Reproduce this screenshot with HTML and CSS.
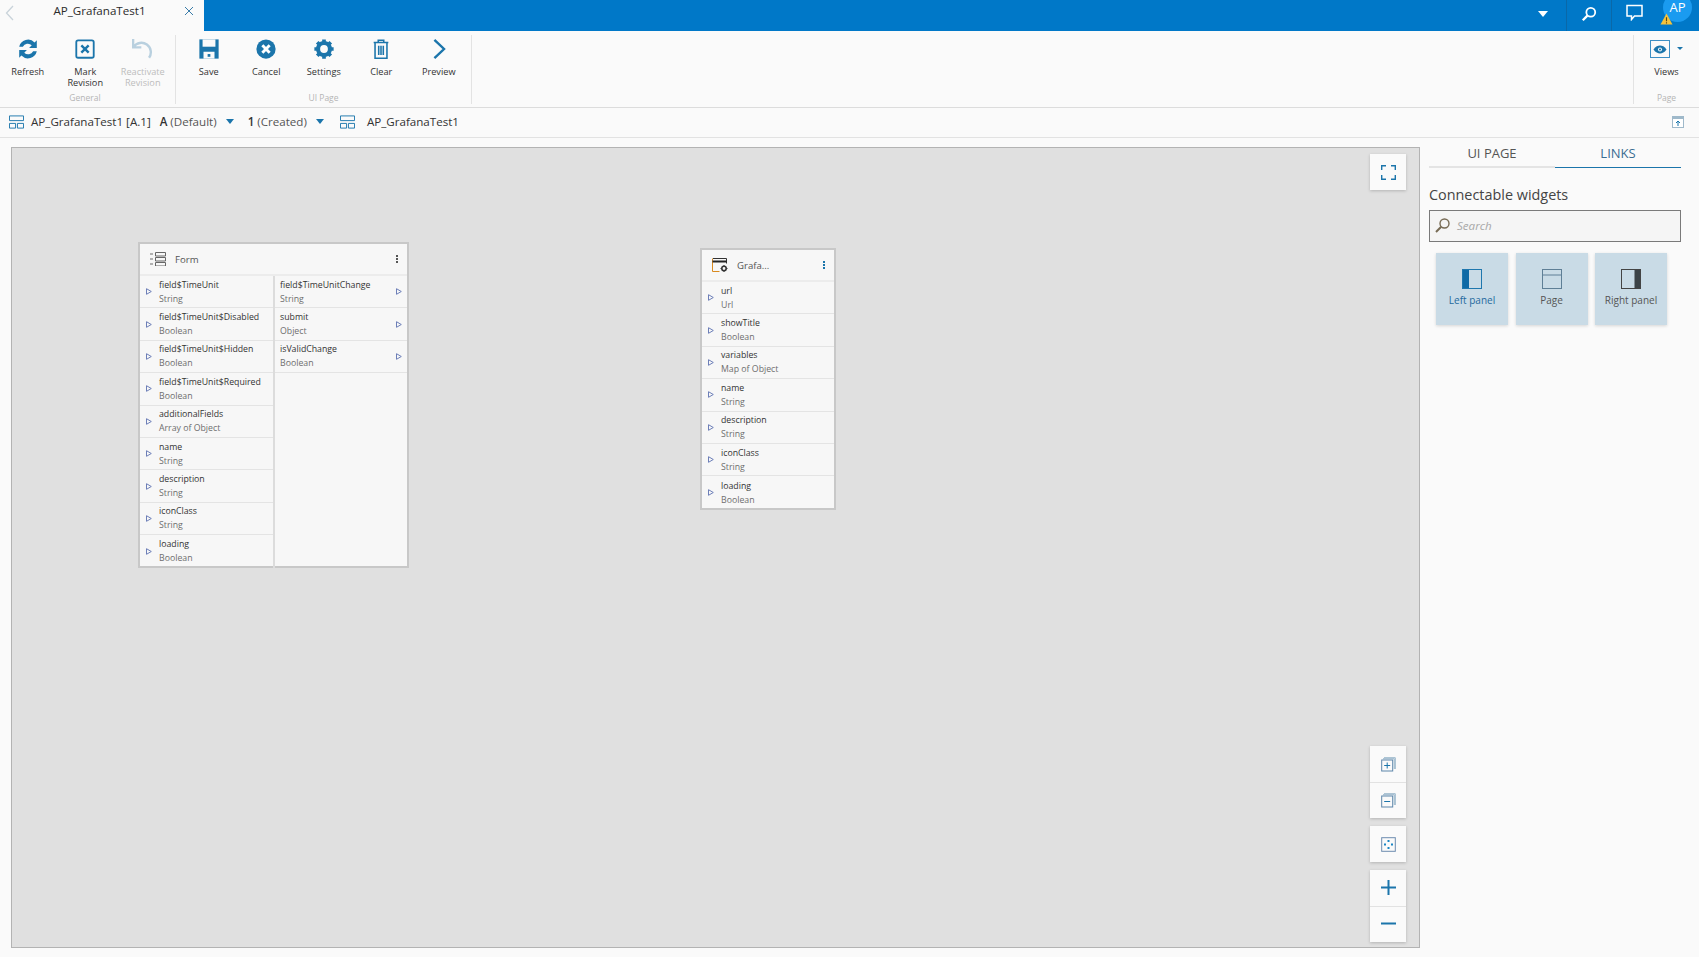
FILE: index.html
```html
<!DOCTYPE html>
<html lang="en">
<head>
<meta charset="utf-8">
<title>AP_GrafanaTest1</title>
<link rel="stylesheet" href="styles.css">
</head>
<body>
<div class="app">
  <header class="topbar">
    <div class="tab">
      <svg class="tab-back" viewBox="0 0 10 16"><path d="M8 1 1.500 8 8 15" fill="none" stroke="#c9d3da" stroke-width="1.300"/></svg>
      <span class="tab-title">AP_GrafanaTest1</span>
      <svg class="tab-close" viewBox="0 0 10 10"><path d="M1 1l8 8M9 1l-8 8" fill="none" stroke="#3a7ca8" stroke-width="1"/></svg>
    </div>
    <div class="top-tools">
      <div class="top-cell cell-caret"><span class="caret-white"></span></div>
      <div class="top-cell cell-search">
        <svg class="ico-top" viewBox="0 0 18 18"><circle cx="11" cy="7" r="5" fill="none" stroke="#fff" stroke-width="2"/><path d="M7.200 10.800 2 16" stroke="#fff" stroke-width="2.600" fill="none"/></svg>
      </div>
      <div class="top-cell cell-chat">
        <svg class="ico-chat" viewBox="0 0 17 17"><path d="M1 1.500h15v10.500H8.500L5.500 15.500v-3.500H1z" fill="none" stroke="#fff" stroke-width="1.500"/></svg>
      </div>
      <div class="avatar">AP</div>
      <svg class="warn" viewBox="0 0 14 13"><path d="M7 .5 13.500 12.500H.5z" fill="#f5c33b"/><path d="M7 4.500v4.500M7 10v1.500" stroke="#5a4310" stroke-width="1.200"/></svg>
    </div>
  </header>

  <section class="ribbon">
    <div class="group group-general">
      <div class="buttons">
        <div class="rbtn">
          <svg class="ico" viewBox="2 2 20 20"><path d="M4 10a8.300 8.300 0 0 1 14-4l2-2v7h-7l2.400-2.400A5.200 5.200 0 0 0 7.300 10zM20 14a8.300 8.300 0 0 1-14 4l-2 2v-7h7l-2.400 2.400a5.200 5.200 0 0 0 8.100-1.400z" fill="#1b75ab"/></svg>
          <span class="rlabel">Refresh</span>
        </div>
        <div class="rbtn">
          <svg class="ico" viewBox="0 0 24 24"><rect x="2.500" y="2.500" width="19" height="19" rx="2" fill="none" stroke="#1b75ab" stroke-width="2"/><path d="M8 8l8 8M16 8l-8 8" stroke="#1b75ab" stroke-width="2.600"/></svg>
          <span class="rlabel">Mark<br>Revision</span>
        </div>
        <div class="rbtn is-disabled">
          <svg class="ico" viewBox="2 2 20 20"><path d="M3 3v7.500h7.500M3.500 10A8.500 8.500 0 1 1 17.500 20" fill="none" stroke="#b9d0df" stroke-width="2.200"/></svg>
          <span class="rlabel">Reactivate<br>Revision</span>
        </div>
      </div>
      <div class="glabel">General</div>
    </div>
    <div class="group group-page">
      <div class="buttons">
        <div class="rbtn">
          <svg class="ico" viewBox="0 0 24 24"><path d="M1.500 1.500h21v21h-21z" fill="#1b75ab"/><rect x="5" y="1.500" width="14" height="8" fill="#fafafa"/><rect x="6" y="15" width="12" height="7.500" fill="#fafafa"/><rect x="10.500" y="17.500" width="3" height="3" fill="#1b75ab"/></svg>
          <span class="rlabel">Save</span>
        </div>
        <div class="rbtn">
          <svg class="ico" viewBox="0 0 24 24"><circle cx="12" cy="12" r="10.500" fill="#1b75ab"/><path d="M8 8l8 8M16 8l-8 8" stroke="#fff" stroke-width="3.200"/></svg>
          <span class="rlabel">Cancel</span>
        </div>
        <div class="rbtn">
          <svg class="ico" viewBox="0 0 24 24"><circle cx="12" cy="12" r="6.500" fill="none" stroke="#1b75ab" stroke-width="4.500"/><path d="M12 1.500v4M12 18.500v4M1.500 12h4M18.500 12h4M4.600 4.600l2.800 2.800M16.600 16.600l2.800 2.800M4.600 19.400l2.800-2.800M16.600 7.400l2.800-2.800" stroke="#1b75ab" stroke-width="4"/></svg>
          <span class="rlabel">Settings</span>
        </div>
        <div class="rbtn">
          <svg class="ico" viewBox="0 0 24 24"><path d="M4 5h16M9 5V2.500h6V5M5.500 5v17h13V5M9.500 8.500v10M12 8.500v10M14.500 8.500v10" fill="none" stroke="#1b75ab" stroke-width="1.700"/></svg>
          <span class="rlabel">Clear</span>
        </div>
        <div class="rbtn">
          <svg class="ico" viewBox="0 0 24 24"><path d="M7 2l10.500 10L7 22" fill="none" stroke="#1b75ab" stroke-width="2.600"/></svg>
          <span class="rlabel">Preview</span>
        </div>
      </div>
      <div class="glabel">UI Page</div>
    </div>
    <div class="group group-views">
      <div class="buttons">
        <div class="rbtn rbtn-views">
          <div class="views-icon">
            <span class="eye-box"><svg class="eye" viewBox="0 0 16 10"><path d="M.5 5C3 1.500 5.500.5 8 .5s5 1 7.500 4.500C13 8.500 10.500 9.500 8 9.500S3 8.500.5 5z" fill="#1b75ab"/><circle cx="8" cy="5" r="2.300" fill="#fafafa"/><circle cx="8" cy="5" r="1.200" fill="#1b75ab"/></svg></span>
            <span class="caret-small"></span>
          </div>
          <span class="rlabel">Views</span>
        </div>
      </div>
      <div class="glabel">Page</div>
    </div>
  </section>

  <nav class="crumbs">
    <svg class="ico-layout" viewBox="0 0 16 14"><path d="M.5.500h15v5H.5zM.5 8.500h6.500v5H.5zM9 8.500h6.500v5H9z" fill="none" stroke="#1b75ab"/></svg>
    <span class="crumb-name">AP_GrafanaTest1 [A.1]</span>
    <span class="crumb-select crumb-a"><b>A</b> (Default)</span><span class="caret-blue"></span>
    <span class="crumb-select crumb-1"><b>1</b> (Created)</span><span class="caret-blue"></span>
    <svg class="ico-layout ico-layout-2" viewBox="0 0 16 14"><path d="M.5.500h15v5H.5zM.5 8.500h6.500v5H.5zM9 8.500h6.500v5H9z" fill="none" stroke="#1b75ab"/></svg>
    <span class="crumb-page">AP_GrafanaTest1</span>
    <svg class="ico-collapse" viewBox="0 0 12 12"><rect x=".5" y=".5" width="11" height="11" fill="#fff" stroke="#9fb9ca"/><rect x=".5" y=".5" width="11" height="2.500" fill="#9fb9ca"/><path d="M6 10V5M4 7l2-2 2 2" fill="none" stroke="#1b75ab"/></svg>
  </nav>

  <main class="workspace">
    <div class="canvas">
      <article class="node node-form">
        <div class="node-head">
          <svg class="node-ico" viewBox="0 0 16 14"><path d="M5.500.5h10v3.500h-10zM5.500 5.500h10V9h-10zM5.500 10.500h10V14h-10z" fill="none" stroke="#666"/><path d="M0 2h3M0 7h3M0 12h3" stroke="#999" stroke-width="1.500"/></svg>
          <span class="node-title">Form</span>
          <span class="node-more"><i></i><i></i><i></i></span>
        </div>
        <div class="node-cols">
          <div class="ports ports-in">
            <div class="port"><svg class="tri" viewBox="0 0 6 7"><path d="M.5.700 5.300 3.500.5 6.300z" fill="none" stroke="#6d7fb8"/></svg><div class="port-text"><span class="pname">field$TimeUnit</span><span class="ptype">String</span></div></div>
            <div class="port"><svg class="tri" viewBox="0 0 6 7"><path d="M.5.700 5.300 3.500.5 6.300z" fill="none" stroke="#6d7fb8"/></svg><div class="port-text"><span class="pname">field$TimeUnit$Disabled</span><span class="ptype">Boolean</span></div></div>
            <div class="port"><svg class="tri" viewBox="0 0 6 7"><path d="M.5.700 5.300 3.500.5 6.300z" fill="none" stroke="#6d7fb8"/></svg><div class="port-text"><span class="pname">field$TimeUnit$Hidden</span><span class="ptype">Boolean</span></div></div>
            <div class="port"><svg class="tri" viewBox="0 0 6 7"><path d="M.5.700 5.300 3.500.5 6.300z" fill="none" stroke="#6d7fb8"/></svg><div class="port-text"><span class="pname">field$TimeUnit$Required</span><span class="ptype">Boolean</span></div></div>
            <div class="port"><svg class="tri" viewBox="0 0 6 7"><path d="M.5.700 5.300 3.500.5 6.300z" fill="none" stroke="#6d7fb8"/></svg><div class="port-text"><span class="pname">additionalFields</span><span class="ptype">Array of Object</span></div></div>
            <div class="port"><svg class="tri" viewBox="0 0 6 7"><path d="M.5.700 5.300 3.500.5 6.300z" fill="none" stroke="#6d7fb8"/></svg><div class="port-text"><span class="pname">name</span><span class="ptype">String</span></div></div>
            <div class="port"><svg class="tri" viewBox="0 0 6 7"><path d="M.5.700 5.300 3.500.5 6.300z" fill="none" stroke="#6d7fb8"/></svg><div class="port-text"><span class="pname">description</span><span class="ptype">String</span></div></div>
            <div class="port"><svg class="tri" viewBox="0 0 6 7"><path d="M.5.700 5.300 3.500.5 6.300z" fill="none" stroke="#6d7fb8"/></svg><div class="port-text"><span class="pname">iconClass</span><span class="ptype">String</span></div></div>
            <div class="port"><svg class="tri" viewBox="0 0 6 7"><path d="M.5.700 5.300 3.500.5 6.300z" fill="none" stroke="#6d7fb8"/></svg><div class="port-text"><span class="pname">loading</span><span class="ptype">Boolean</span></div></div>
          </div>
          <div class="ports ports-out">
            <div class="port port-out"><div class="port-text"><span class="pname">field$TimeUnitChange</span><span class="ptype">String</span></div><svg class="tri" viewBox="0 0 6 7"><path d="M.5.700 5.300 3.500.5 6.300z" fill="none" stroke="#6d7fb8"/></svg></div>
            <div class="port port-out"><div class="port-text"><span class="pname">submit</span><span class="ptype">Object</span></div><svg class="tri" viewBox="0 0 6 7"><path d="M.5.700 5.300 3.500.5 6.300z" fill="none" stroke="#6d7fb8"/></svg></div>
            <div class="port port-out"><div class="port-text"><span class="pname">isValidChange</span><span class="ptype">Boolean</span></div><svg class="tri" viewBox="0 0 6 7"><path d="M.5.700 5.300 3.500.5 6.300z" fill="none" stroke="#6d7fb8"/></svg></div>
          </div>
        </div>
      </article>

      <article class="node node-grafana">
        <div class="node-head">
          <svg class="node-ico node-ico-g" viewBox="0 0 16 14"><path d="M1 .5h13.500v5" fill="none" stroke="#333"/><path d="M.5.500v13h7" fill="none" stroke="#d98a1f"/><path d="M.5 3.500h14" stroke="#222" stroke-width="2"/><circle cx="12" cy="10.500" r="2.200" fill="none" stroke="#333" stroke-width="1.600"/><path d="M12 7v1M12 13v1M8.500 10.500h1M14.500 10.500h1" stroke="#333"/></svg>
          <span class="node-title">Grafa...</span>
          <span class="node-more node-more-blue"><i></i><i></i><i></i></span>
        </div>
        <div class="ports ports-single">
          <div class="port"><svg class="tri" viewBox="0 0 6 7"><path d="M.5.700 5.300 3.500.5 6.300z" fill="none" stroke="#6d7fb8"/></svg><div class="port-text"><span class="pname">url</span><span class="ptype">Url</span></div></div>
          <div class="port"><svg class="tri" viewBox="0 0 6 7"><path d="M.5.700 5.300 3.500.5 6.300z" fill="none" stroke="#6d7fb8"/></svg><div class="port-text"><span class="pname">showTitle</span><span class="ptype">Boolean</span></div></div>
          <div class="port"><svg class="tri" viewBox="0 0 6 7"><path d="M.5.700 5.300 3.500.5 6.300z" fill="none" stroke="#6d7fb8"/></svg><div class="port-text"><span class="pname">variables</span><span class="ptype">Map of Object</span></div></div>
          <div class="port"><svg class="tri" viewBox="0 0 6 7"><path d="M.5.700 5.300 3.500.5 6.300z" fill="none" stroke="#6d7fb8"/></svg><div class="port-text"><span class="pname">name</span><span class="ptype">String</span></div></div>
          <div class="port"><svg class="tri" viewBox="0 0 6 7"><path d="M.5.700 5.300 3.500.5 6.300z" fill="none" stroke="#6d7fb8"/></svg><div class="port-text"><span class="pname">description</span><span class="ptype">String</span></div></div>
          <div class="port"><svg class="tri" viewBox="0 0 6 7"><path d="M.5.700 5.300 3.500.5 6.300z" fill="none" stroke="#6d7fb8"/></svg><div class="port-text"><span class="pname">iconClass</span><span class="ptype">String</span></div></div>
          <div class="port"><svg class="tri" viewBox="0 0 6 7"><path d="M.5.700 5.300 3.500.5 6.300z" fill="none" stroke="#6d7fb8"/></svg><div class="port-text"><span class="pname">loading</span><span class="ptype">Boolean</span></div></div>
        </div>
      </article>

      <div class="tool tool-full">
        <svg class="tool-ico" viewBox="0 0 15 15"><path d="M.7 5V.7H5M10 .7h4.300V5M14.300 10v4.300H10M5 14.300H.7V10" fill="none" stroke="#1b75ab" stroke-width="1.400"/></svg>
      </div>
      <div class="tool-stack">
        <div class="tool-group">
          <div class="tool">
            <svg class="tool-ico" viewBox="0 0 15 15"><path d="M3 .7h11.300V12" fill="none" stroke="#9cb8cc"/><path d="M2 1.700h11.300V12" fill="none" stroke="#9cb8cc"/><rect x=".7" y="3" width="11" height="11" fill="#fafafa" stroke="#5d86aa"/><path d="M6.200 5.500v6M3.200 8.500h6" stroke="#1b75ab"/></svg>
          </div>
          <div class="tool">
            <svg class="tool-ico" viewBox="0 0 15 15"><path d="M3 .7h11.300V12" fill="none" stroke="#9cb8cc"/><path d="M2 1.700h11.300V12" fill="none" stroke="#9cb8cc"/><rect x=".7" y="3" width="11" height="11" fill="#fafafa" stroke="#5d86aa"/><path d="M3.200 8.500h6" stroke="#1b75ab"/></svg>
          </div>
        </div>
        <div class="tool-group">
          <div class="tool">
            <svg class="tool-ico" viewBox="0 0 15 15"><rect x=".7" y=".7" width="13.600" height="13.600" fill="none" stroke="#6d8cb0"/><path d="M7.500 3v2M7.500 10v2M3 7.500h2M10 7.500h2" stroke="#1b85c4" stroke-width="2"/></svg>
          </div>
        </div>
        <div class="tool-group">
          <div class="tool tool-plus">
            <svg class="tool-ico" viewBox="0 0 15 15"><path d="M7.500 0v15M0 7.500h15" stroke="#1b75ab" stroke-width="2"/></svg>
          </div>
          <div class="tool tool-minus">
            <svg class="tool-ico" viewBox="0 0 15 15"><path d="M0 7.500h15" stroke="#1b75ab" stroke-width="2"/></svg>
          </div>
        </div>
      </div>
    </div>

    <aside class="panel">
      <div class="tabs">
        <div class="ptab">UI PAGE</div>
        <div class="ptab is-active">LINKS</div>
      </div>
      <h2 class="panel-title">Connectable widgets</h2>
      <div class="search">
        <svg class="search-ico" viewBox="0 0 15 15"><circle cx="9.500" cy="5.500" r="4.500" fill="none" stroke="#776b55" stroke-width="1.400"/><path d="M6.200 8.800 1 14" stroke="#776b55" stroke-width="2"/></svg>
        <span class="search-text">Search</span>
      </div>
      <div class="cards">
        <div class="card">
          <svg class="card-ico" viewBox="0 0 20 20"><rect x=".5" y=".5" width="19" height="19" fill="none" stroke="#1f77ae"/><rect x="1" y="1" width="6" height="18" fill="#0f6aa6"/></svg>
          <span class="card-label label-blue">Left panel</span>
        </div>
        <div class="card">
          <svg class="card-ico" viewBox="0 0 20 20"><rect x=".5" y=".5" width="19" height="19" fill="none" stroke="#5f7f96"/><path d="M1 6h18" stroke="#5f7f96"/></svg>
          <span class="card-label">Page</span>
        </div>
        <div class="card">
          <svg class="card-ico" viewBox="0 0 20 20"><rect x=".5" y=".5" width="19" height="19" fill="none" stroke="#444"/><rect x="13.500" y="1" width="5.500" height="18" fill="#3c4347"/></svg>
          <span class="card-label">Right panel</span>
        </div>
      </div>
    </aside>
  </main>
</div>
</body>
</html>
```

FILE: styles.css
```css
* { box-sizing: border-box; }
html, body { margin: 0; height: 100%; }
body {
  font-family: "Open Sans", "Liberation Sans", sans-serif;
  color: #333;
  background: #fafafa;
  overflow: hidden;
}
.app { display: flex; flex-direction: column; width: 1699px; height: 957px; }

/* top bar */
.topbar {
  height: 31px;
  flex: none;
  display: flex;
  justify-content: space-between;
  background: #0078c8;
}
.tab {
  width: 204px;
  background: #fafafa;
  display: flex;
  align-items: center;
  padding: 0 8px 0 5px;
}
.tab-back { width: 10px; height: 16px; flex: none; margin-top: -6px; }
.tab-title { flex: 1; text-align: center; font-size: 11.600px; color: #2b2b2b; margin-top: -10px; }
.tab-close { width: 10px; height: 10px; flex: none; margin: -10px 2px 0 0; }
.top-tools { position: relative; display: flex; height: 31px; padding-right: 65px; }
.top-cell { height: 31px; display: flex; align-items: center; justify-content: center; border-right: 1px solid #0a68a8; }
.cell-caret { width: 46px; }
.cell-search { width: 45px; }
.cell-chat { width: 0; border: 0; overflow: visible; margin-left: 22px; }
.caret-white { border-left: 5px solid transparent; border-right: 5px solid transparent; border-top: 6px solid #fff; margin-top: -4px; margin-left: -1px; }
.ico-top { width: 16px; height: 16px; margin-top: -4px; flex: none; }
.ico-chat { width: 17px; height: 17px; margin-top: -7px; flex: none; }
.avatar {
  position: absolute;
  right: 7px;
  top: -7px;
  width: 29px;
  height: 29px;
  border-radius: 50%;
  background: #1a9bf0;
  color: #fff;
  font-size: 13px;
  line-height: 29px;
  text-align: center;
}
.warn { position: absolute; right: 26px; top: 13px; width: 13px; height: 12px; }

/* ribbon */
.ribbon {
  flex: none;
  height: 77px;
  display: flex;
  border-bottom: 1px solid #dcdcdc;
  background: #fafafa;
  padding-top: 4px;
}
.group { display: flex; flex-direction: column; height: 69px; border-right: 1px solid #e3e3e3; }
.group-general { width: 176px; }
.group-page { width: 296px; }
.group-views { width: 66px; margin-left: auto; border-right: 0; border-left: 1px solid #e3e3e3; }
.buttons { display: flex; flex: 1; }
.group-general .buttons { margin-left: -1px; }
.group-page .buttons { padding-left: 4px; }
.rbtn { width: 57.500px; display: flex; flex-direction: column; align-items: center; padding-top: 3px; }
.rbtn-views { width: 65px; }
.ico { width: 22px; height: 22px; flex: none; }
.rlabel { margin-top: 6px; font-size: 9.200px; line-height: 11px; text-align: center; color: #333; white-space: nowrap; }
.is-disabled .rlabel { color: #bdbdbd; }
.glabel { font-size: 8.500px; line-height: 12px; text-align: center; color: #b5b5b5; }
.group-general .glabel { padding-right: 5px; }
.views-icon { position: relative; height: 22px; display: flex; align-items: center; padding-right: 14px; }
.eye-box { width: 20px; height: 18px; display: flex; align-items: center; justify-content: center; border: 1px solid #3d8fc4; background: #fafafa; }
.eye { width: 14px; height: 9px; }
.caret-small { position: absolute; left: 27px; top: 9px; border-left: 3px solid transparent; border-right: 3px solid transparent; border-top: 3px solid #1b75ab; }

/* breadcrumb */
.crumbs {
  flex: none;
  height: 30px;
  display: flex;
  align-items: center;
  padding: 0 15px 2px 9px;
  border-bottom: 1px solid #e2e2e2;
  font-size: 11.600px;
  color: #333;
  white-space: nowrap;
}
.ico-layout { width: 15px; height: 14px; flex: none; }
.crumb-name { margin-left: 7px; }
.crumb-select { color: #555; }
.crumb-select b { color: #333; font-weight: 600; }
.crumb-a { margin-left: 9px; }
.crumb-1 { margin-left: 14px; }
.caret-blue { margin-left: 9px; border-left: 4.500px solid transparent; border-right: 4.500px solid transparent; border-top: 5px solid #1b75ab; }
.ico-layout-2 { margin-left: 16px; }
.crumb-page { margin-left: 12px; }
.ico-collapse { width: 12px; height: 12px; margin-left: auto; }

/* workspace */
.workspace { flex: 1; display: flex; min-height: 0; }
.canvas {
  position: relative;
  width: 1409px;
  margin: 9px 0 9px 11px;
  background: #e0e0e0;
  border: 1px solid #b3b3b3;
}

/* nodes on the free canvas */
.node {
  position: absolute;
  background: #f7f7f7;
  border: 2px solid #c8c8c8;
  font-size: 8.750px;
}
.node-form { left: 126px; top: 94px; width: 271px; height: 326px; }
.node-grafana { left: 688px; top: 100px; width: 136px; height: 262px; }
.node-head { height: 32px; display: flex; align-items: center; border-bottom: 2px solid #ececec; padding: 0 9px 0 10px; }
.node-ico { width: 16px; height: 14px; flex: none; }
.node-title { margin-left: 9px; font-size: 9.600px; color: #555; }
.node-more { margin-left: auto; display: flex; flex-direction: column; gap: 1px; }
.node-more i { display: block; width: 2px; height: 2px; background: #555; }
.node-more-blue i { background: #1b75ab; }
.node-cols { display: flex; }
.ports-in { width: 135px; border-right: 2px solid #dcdcdc; height: 292px; }
.ports-out { flex: 1; }
.port { height: 32.400px; display: flex; align-items: center; border-bottom: 1px solid #e4e4e4; padding-left: 6px; }
.port-out { padding-left: 5px; padding-right: 5px; }
.tri { width: 6px; height: 7px; flex: none; }
.port-text { display: flex; flex-direction: column; margin-left: 7px; min-width: 0; flex: 1; }
.port-out .port-text { margin-left: 0; }
.pname { color: #333; line-height: 14px; white-space: nowrap; }
.ptype { color: #6e6e6e; line-height: 14px; white-space: nowrap; }
.ports .port:last-child { border-bottom: 0; }
.ports-out .port:last-child { border-bottom: 1px solid #e4e4e4; }

/* canvas tools */
.tool {
  width: 36px;
  height: 36px;
  display: flex;
  align-items: center;
  justify-content: center;
  background: #fafafa;
}
.tool-full { position: absolute; right: 13px; top: 6px; box-shadow: 0 1px 3px rgba(0, 0, 0, .2); }
.tool-stack { position: absolute; right: 13px; bottom: 5px; display: flex; flex-direction: column; gap: 8px; }
.tool-group { box-shadow: 0 1px 3px rgba(0, 0, 0, .2); }
.tool-group .tool + .tool { border-top: 1px solid #e2e2e2; }
.tool-ico { width: 15px; height: 15px; }
.tool-plus .tool-ico { margin-bottom: 1px; }
.tool-minus .tool-ico { margin-bottom: 2px; }

/* right panel */
.panel { flex: 1; padding: 0 18px 0 9px; min-width: 0; }
.tabs { display: flex; height: 30px; }
.ptab { flex: 1; text-align: center; font-size: 13px; line-height: 30px; color: #555; border-bottom: 2px solid #e4e4e4; }
.ptab.is-active { color: #3a6d92; border-bottom: 1px solid #1b75ab; }
.panel-title { margin: 17px 0 0; font-size: 14.400px; line-height: 20px; font-weight: 500; color: #444; }
.search {
  margin-top: 5px;
  height: 32px;
  display: flex;
  align-items: center;
  padding: 0 0 2px 5px;
  background: #f5f5f5;
  border: 1px solid #7a7a7a;
}
.search-ico { width: 15px; height: 15px; flex: none; }
.search-text { margin-left: 7px; font-size: 11.600px; font-style: italic; color: #a8a8a8; }
.cards { display: flex; gap: 7.500px; padding: 11px 0 0 7px; }
.card {
  width: 72px;
  height: 72px;
  display: flex;
  flex-direction: column;
  align-items: center;
  padding-top: 16px;
  background: #c9dbe6;
  box-shadow: 0 1px 3px rgba(0, 0, 0, .15);
}
.card-ico { width: 20px; height: 20px; flex: none; }
.card-label { margin-top: 4px; font-size: 10px; line-height: 14px; color: #555; white-space: nowrap; }
.label-blue { color: #1f6a9e; }
```
